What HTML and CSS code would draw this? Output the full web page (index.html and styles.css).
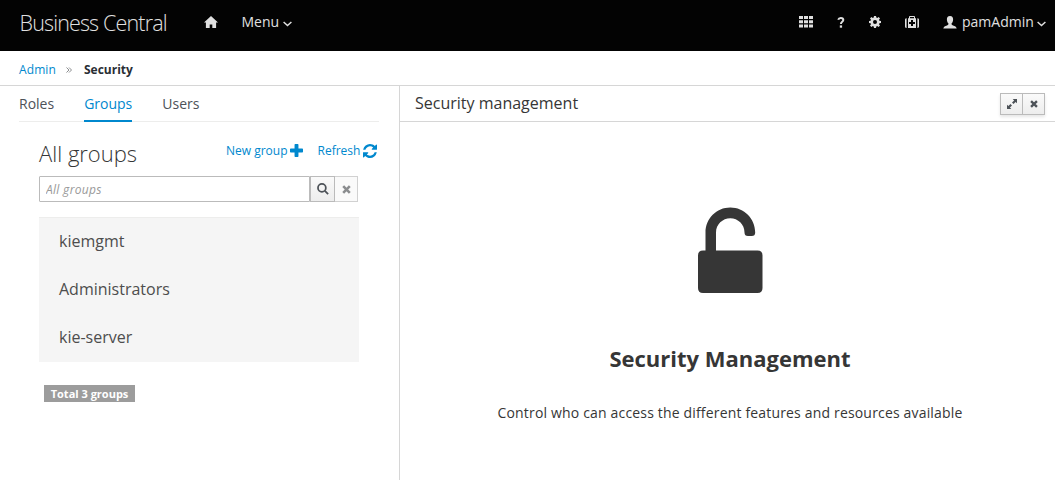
FILE: index.html
```html
<!DOCTYPE html>
<html lang="en">
<head>
<meta charset="utf-8">
<title>Business Central</title>
<link rel="stylesheet" href="styles.css">
</head>
<body>
<header class="topbar">
  <span class="brand">Business Central</span>
  <svg class="home" width="14" height="12" viewBox="0 0 14 12"><path d="M7 0 14 6.6H12.1V12H8.3V8.4H5.7V12H1.9V6.6H0Z"/></svg>
  <span class="menu">Menu</span>
  <svg class="chev" width="9" height="6" viewBox="0 0 9 6"><path d="M.6 1 4.500 4.500 8.400 1"/></svg>
  <nav class="tools">
    <svg class="apps" width="14" height="12" viewBox="0 0 14 12"><path d="M0 0h4v3H0zM5 0h4v3H5zM10 0h4v3h-4zM0 4.2h4v3H0zM5 4.2h4v3H5zM10 4.2h4v3h-4zM0 8.4h4v3H0zM5 8.4h4v3H5zM10 8.4h4v3h-4z"/></svg>
    <svg class="help" width="8" height="11" viewBox="0 0 8 11"><path d="M1.2 2.8C1.6 1.5 2.6 1 3.8 1 5.4 1 6.3 1.8 6.3 3 6.3 4.9 3.9 4.8 3.9 7" fill="none" stroke="#e0e0e0" stroke-width="2"/><path d="M2.8 8.4h2.3v2.3H2.8z"/></svg>
    <svg class="gear" width="12" height="12" viewBox="0 0 12 12"><path fill-rule="evenodd" d="M5 0h2l.35 1.6.9.4L9.7 1.1 11 2.4 10 3.8l.4.9L12 5v2l-1.6.3-.4.9 1 1.4-1.4 1.4-1.4-1-.9.4L7 12H5l-.3-1.6-.9-.4-1.4 1L1 9.600l1-1.4-.4-.9L0 7V5l1.600-.3.400-.9L1 2.400 2.400 1l1.400 1 .9-.4ZM6 4a2 2 0 1 0 0 4 2 2 0 0 0 0-4Z"/></svg>
    <svg class="kit" width="14" height="12" viewBox="0 0 14 12"><path fill-rule="evenodd" d="M1.600 2.200V12C.5 12 0 11.400 0 10.500V3.700C0 2.800.6 2.200 1.600 2.200ZM12.400 2.200V12c1 0 1.600-.6 1.600-1.500V3.700c0-.9-.6-1.500-1.600-1.500ZM3 2.200H4V.9C4 .3 4.300 0 4.900 0h4.200c.6 0 .9.300.9.900v1.300h1V12H3ZM5 2.200h4V1H5ZM6 4v2H4v2h2v2h2V8h2V6H8V4Z"/></svg>
    <svg class="user" width="14" height="13" viewBox="0 0 14 13"><path d="M7 0C9.300 0 10.200 1.500 10.100 3.700 10 5.500 9.300 6.700 8.500 7.600c-.2.900.3 1.400 1.500 1.800 2 .6 3.400 1.200 3.700 3.100H.3C.6 10.600 2 10 4 9.400 5.200 9 5.700 8.500 5.500 7.600 4.700 6.700 4 5.500 3.900 3.700 3.800 1.500 4.700 0 7 0Z"/></svg>
    <span class="username">pamAdmin</span>
    <svg class="chev" width="9" height="6" viewBox="0 0 9 6"><path d="M.6 1 4.500 4.500 8.400 1"/></svg>
  </nav>
</header>
<div class="crumbs">
  <a>Admin</a>
  <svg width="6" height="6" viewBox="0 0 6 6"><path d="M.5.5 3 3 .5 5.500M3 .5 5.500 3 3 5.500"/></svg>
  <strong>Security</strong>
</div>
<main class="panes">
  <section class="left">
    <nav class="tabs"><span>Roles</span><span class="active">Groups</span><span>Users</span></nav>
    <div class="head">
      <h2>All groups</h2>
      <a class="new">New group</a>
      <svg class="plus" width="13" height="13" viewBox="0 0 12 12"><path d="M4.200.7q0-.7.700-.7h2.200q.7 0 .7.700v3.500h3.500q.7 0 .7.700v2.200q0 .7-.7.700H7.800v3.500q0 .7-.7.700H4.900q-.7 0-.7-.7V7.800H.7Q0 7.800 0 7.100V4.900q0-.7.700-.7h3.500Z"/></svg>
      <a class="refresh">Refresh</a>
      <svg class="sync" width="14" height="14" viewBox="0 0 1536 1536"><path d="M1511 928q0 5-1 7-64 268-268 434.500T764 1536q-146 0-282.500-55T238 1324l-129 129q-19 19-45 19t-45-19-19-45V960q0-26 19-45t45-19h448q26 0 45 19t19 45-19 45l-137 137q71 66 161 102t187 36q134 0 250-65t186-179q11-17 53-117 8-23 30-23h192q13 0 22.500 9.500t9.500 22.500zm25-800v448q0 26-19 45t-45 19h-448q-26 0-45-19t-19-45 19-45l138-138Q969 256 768 256q-134 0-250 65T332 500q-11 17-53 117-8 23-30 23H50q-13 0-22.500-9.500T18 608v-7q65-268 270-434.500T768 0q146 0 284 55.500T1297 212l130-129q19-19 45-19t45 19 19 45z"/></svg>
    </div>
    <div class="search">
      <input type="text" placeholder="All groups">
      <button class="find"><svg width="12" height="12" viewBox="0 0 11 11"><circle cx="4.500" cy="4.500" r="3.600"/><path d="m7.200 7.200 3 3"/></svg></button>
      <button class="clear"><svg width="9" height="9" viewBox="0 0 9 9"><path d="m1.200 1.200 6.600 6.600m0-6.600L1.200 7.800"/></svg></button>
    </div>
    <ul class="groups"><li>kiemgmt</li><li>Administrators</li><li>kie-server</li></ul>
    <span class="total">Total 3 groups</span>
  </section>
  <section class="right">
    <div class="panel-head">
      <span class="panel-title">Security management</span>
      <div class="btns">
        <button><svg width="10" height="10" viewBox="0 0 10 10"><path class="solid" d="M5.700 0H10v4.300L8.600 2.900 6.500 5 5 3.500 7.100 1.400ZM0 5.700v4.300h4.300L2.900 8.600 5 6.500 3.500 5 1.400 7.100Z"/></svg></button>
        <button><svg width="8" height="8" viewBox="0 0 9 9"><path d="m1.200 1.200 6.600 6.600m0-6.600L1.200 7.800"/></svg></button>
      </div>
    </div>
    <div class="intro">
      <svg width="65" height="87" viewBox="0 0 65 87"><path d="M7.500 43V25.500C7.500 11.500 18.500.5 32.300.5S57.200 11.500 57.200 25.500q0 3.500-3.500 3.500H50q-3.500 0-3.500-3.500C46.500 17.500 40 11.300 32.300 11.300S18 17.500 18 25.500V43.500H59.500q5 0 5 5v32.500q0 5-5 5H5q-5 0-5-5V48.500q0-5 5-5H7.500Z"/></svg>
      <h1>Security Management</h1>
      <p>Control who can access the different features and resources available</p>
    </div>
  </section>
</main>
</body>
</html>
```
FILE: styles.css
```css
* { box-sizing: border-box; }
body { margin: 0; height: 480px; overflow: hidden; display: flex; flex-direction: column; background: #fff; color: #363636; font: 14px/20px "Open Sans", sans-serif; }
svg { display: block; flex: none; }
h1, h2, p, ul { margin: 0; padding: 0; }
span, a, strong, h1, h2, p { white-space: nowrap; }
a { color: #0088ce; }

.topbar { flex: none; height: 51px; display: flex; align-items: flex-start; padding: 0 9px 0 19.500px; background: #030303; color: #e0e0e0; }
.topbar svg { fill: #e0e0e0; }
.brand { width: 184px; margin-top: 8px; font-size: 21.500px; line-height: 29px; font-weight: 300; letter-spacing: -.85px; }
.home { margin-top: 16px; }
.menu { width: 38px; margin: 12px 3px 0 24px; }
.topbar .chev { margin-top: 21px; fill: none; stroke: #e0e0e0; stroke-width: 1.5; }
.tools { display: flex; margin-left: auto; }
.apps { margin: 16px 24px 0 0; }
.help { margin: 17px 24px 0 0; }
.gear { margin: 16px 24px 0 0; }
.kit { margin: 16px 24px 0 0; }
.user { margin: 16px 5px 0 0; }
.username { width: 73px; margin: 12px 2px 0 0; }

.crumbs { flex: none; height: 35px; display: flex; align-items: center; padding: 3px 0 0 19px; border-bottom: 1px solid #d6d6d6; font-size: 12px; }
.crumbs a { width: 47px; letter-spacing: .1px; }
.crumbs svg { margin-right: 12px; fill: none; stroke: #8b8d8f; }
.crumbs strong { font-weight: 700; color: #292e34; }

.panes { flex: 1; display: flex; min-height: 0; }
.left { width: 400px; border-right: 1px solid #d6d6d6; }
.tabs { display: flex; gap: 30px; height: 36px; margin: 0 20px 0 19px; border-bottom: 1px solid #ededec; color: #4d5258; }
.tabs span { height: 36px; padding-top: 8px; }
.tabs .active { color: #0088ce; border-bottom: 2px solid #0088ce; }
.head { display: flex; height: 54px; padding: 0 22px 0 39px; font-size: 12px; }
.head h2 { width: 187px; margin-top: 16px; font-size: 22px; line-height: 30px; font-weight: 300; }
.head a { margin-top: 19px; }
.head svg { fill: #0088ce; }
.new { width: 64px; }
.plus { margin: 22px 14.500px 0 0; }
.refresh { width: 45.500px; }
.sync { margin-top: 22px; }
.search { display: flex; width: 319px; height: 26px; margin-left: 39px; }
.search input { width: 271px; border: 1px solid #bbb; border-radius: 1px 0 0 1px; padding: 0 6px; font: 12px "Open Sans", sans-serif; }
.search input::placeholder { color: #999; font-style: italic; opacity: 1; letter-spacing: .3px; }
button { display: flex; align-items: center; justify-content: center; padding: 0; border: 1px solid #bbb; background: linear-gradient(#fafafa, #ededed); }
button svg { fill: none; stroke: #4d5258; stroke-width: 2.600; }
.find { width: 25px; }
.find svg { stroke-width: 1.600; }
.clear { width: 23px; border-color: #d1d1d1; border-left: 0; background: #fafafa; }
.clear svg { stroke: #8b8d8f; }
.groups { width: 320px; height: 145px; margin: 15px 0 0 39px; border-top: 1px solid #ededec; background: #f5f5f5; list-style: none; font-size: 16px; color: #4d4d4d; }
.groups li { height: 48px; padding: 13px 20px 0; line-height: 20px; }
.total { display: block; width: 91px; height: 17px; margin: 23px 0 0 44px; background: #9c9c9c; color: #fff; font-size: 11px; line-height: 18px; font-weight: 700; text-align: center; }

.right { flex: 1; }
.panel-head { display: flex; justify-content: space-between; height: 36px; padding: 7px 10px 0 15px; border-bottom: 1px solid #d6d6d6; }
.panel-title { font-size: 16px; }
.btns { display: flex; height: 22px; box-shadow: 0 2px 3px rgba(3,3,3,.1); }
.btns button { width: 23px; }
.btns button + button { border-left: 0; width: 22px; }
.solid { fill: #4d5258; stroke: none; }
.intro { display: flex; flex-direction: column; align-items: center; padding: 85px 0 0 5px; }
.intro svg { fill: #363636; }
.intro h1 { margin-top: 49px; font-size: 22px; line-height: 30px; font-weight: 700; }
.intro p { margin-top: 30px; font-size: 14px; letter-spacing: .17px; }
```
